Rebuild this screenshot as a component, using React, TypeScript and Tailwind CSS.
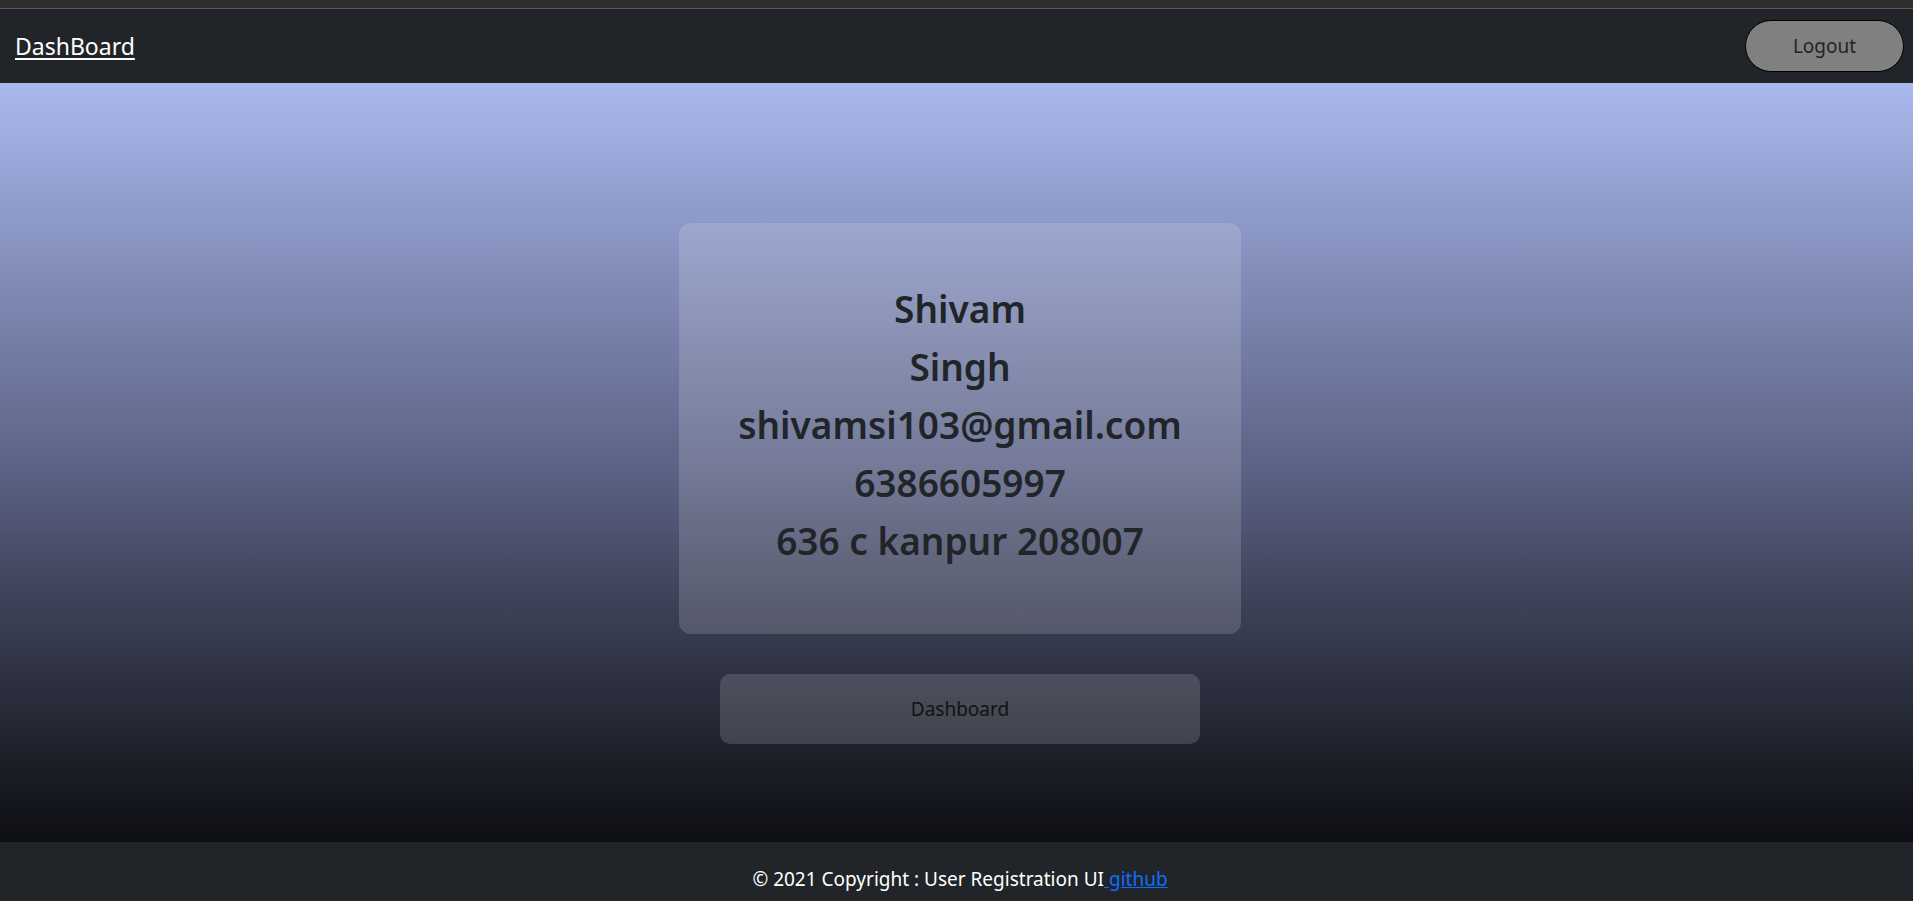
const App = () => {
  const font = { fontFamily: '"Noto Sans", "Open Sans", sans-serif' };

  return (
    <div className="flex min-h-screen w-full flex-col bg-[#212529]" style={font}>
      {/* window strip */}
      <div className="h-[9px] bg-[#2e2e2e] border-b border-[#5a5a5a]" />

      {/* Navbar */}
      <nav className="flex h-[74px] items-center justify-between bg-[#212529] pl-[15px] pr-[9px]">
        <a href="#" className="text-[23px] leading-none text-white underline underline-offset-[3px]">
          DashBoard
        </a>
        <button className="h-[52px] w-[159px] rounded-full border border-black bg-[#808080] text-[19px] text-[#212529]">
          Logout
        </button>
      </nav>

      {/* Main */}
      <main className="flex h-[759px] flex-col items-center bg-gradient-to-b from-[#aab9ee] via-[#5d6487] to-[#0e0f13] pl-[7px] pt-[140px]">
        <div className="flex w-[562px] flex-col items-center rounded-xl bg-white/15 pt-[57px] pb-[64px] text-center text-[37px] font-semibold leading-[58px] text-[#212529]">
          <span>Shivam</span>
          <span>Singh</span>
          <span>shivamsi103@gmail.com</span>
          <span>6386605997</span>
          <span>636 c kanpur 208007</span>
        </div>

        <button className="mt-[40px] h-[70px] w-[480px] rounded-[10px] bg-white/15 text-[19px] text-[#111215]">
          Dashboard
        </button>
      </main>

      {/* Footer */}
      <footer className="flex h-[59px] justify-center bg-[#212529] pl-[7px] pt-[23px] text-[19px] leading-[28px] text-white">
        <span>
          © 2021 Copyright : User Registration UI
          <a href="#" className="text-[#0d6efd] underline">
            {' '}github
          </a>
        </span>
      </footer>
    </div>
  );
};

export default App;
